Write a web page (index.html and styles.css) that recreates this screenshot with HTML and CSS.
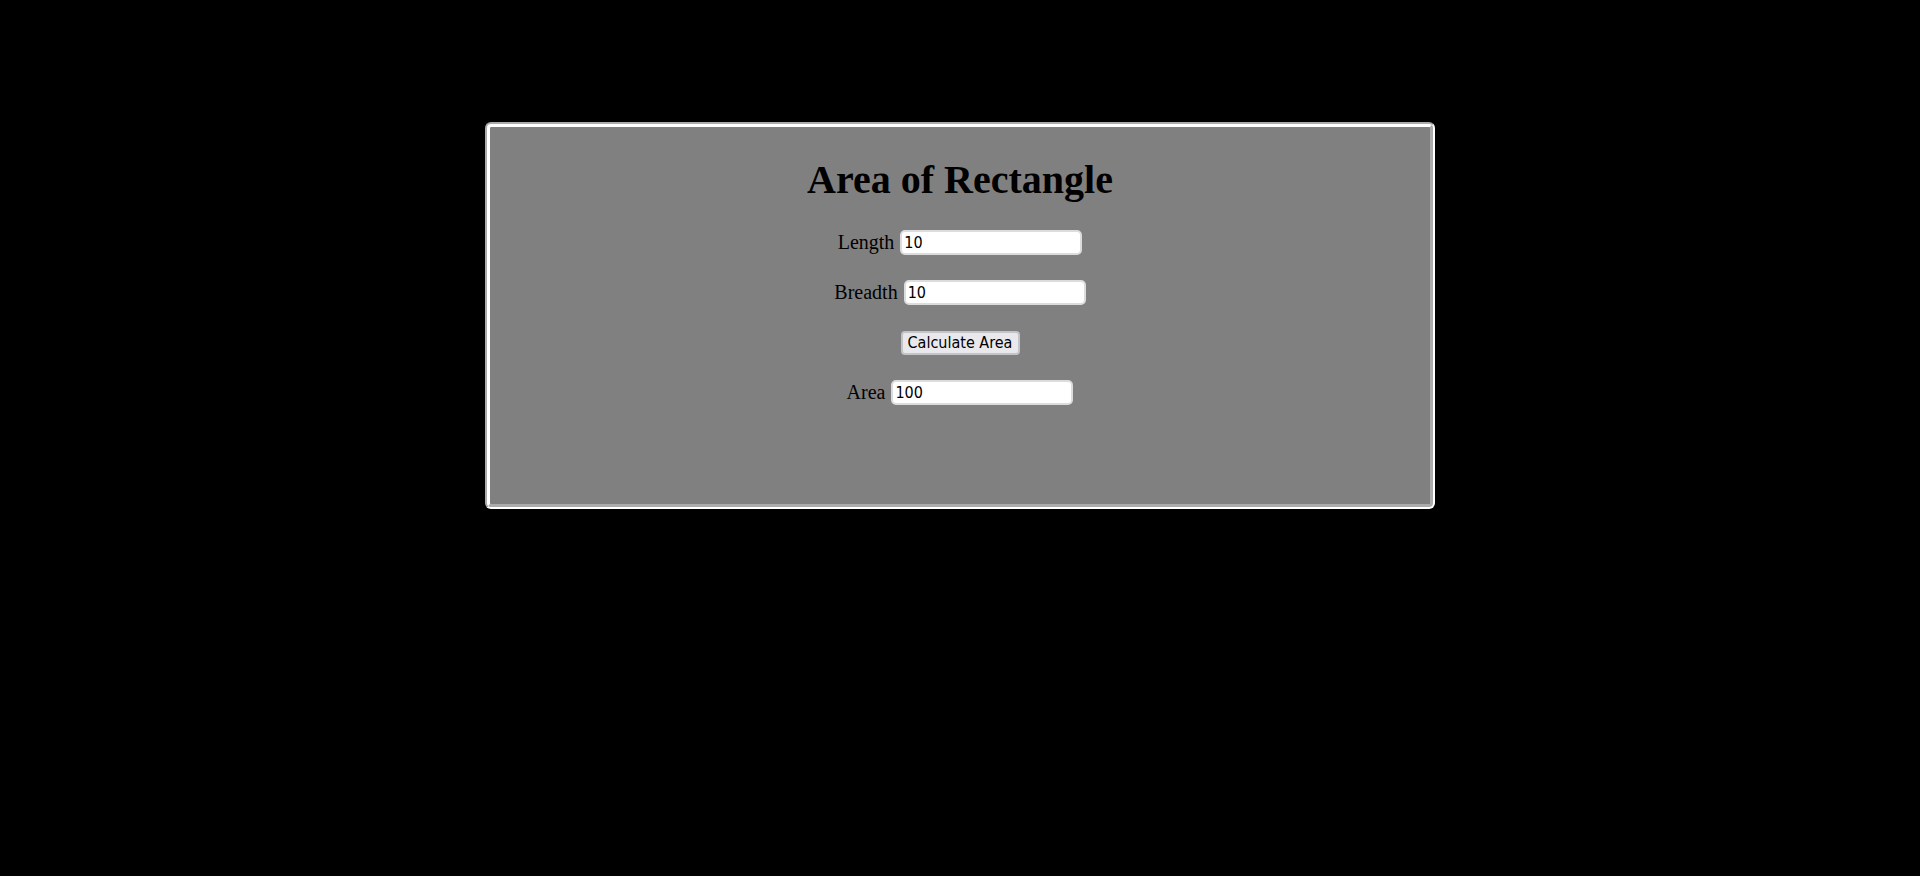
FILE: index.html
```html
<!DOCTYPE html>
<html>
<head>
<meta charset="utf-8">
<title>Area of Rectangle</title>
<link rel="stylesheet" href="styles.css">
</head>
<body>
<div class="panel">
  <h1 class="title">Area of Rectangle</h1>
  <div class="form">
    <div class="row"><label class="lbl">Length</label><input class="field" type="text" value="10"></div>
    <div class="row"><label class="lbl">Breadth</label><input class="field" type="text" value="10"></div>
    <div class="row"><button class="btn" type="button">Calculate Area</button></div>
    <div class="row"><label class="lbl">Area</label><input class="field" type="text" value="100"></div>
  </div>
</div>
</body>
</html>
```
FILE: styles.css
```css
html, body {
  margin: 0;
  padding: 0;
  background: #000;
}
body {
  padding-top: 122px;
  font-family: "Liberation Serif", "Times New Roman", serif;
  font-size: 20px;
  color: #000;
}
.panel {
  width: 940px;
  margin: 0 auto;
  background: #808080;
  border: 5px groove #fff;
  border-radius: 6px;
  padding: 0 0 99px;
}
.title {
  margin: 30px 0 27px;
  font-size: 40px;
  font-weight: bold;
  text-align: center;
  line-height: 46px;
}
.form {
  display: flex;
  flex-direction: column;
  align-items: center;
  gap: 25px;
}
.row {
  height: 25px;
  display: flex;
  align-items: center;
  justify-content: center;
  gap: 6px;
}
.lbl {
  line-height: 23px;
}
.field {
  box-sizing: border-box;
  width: 182px;
  height: 25px;
  margin: 0;
  padding: 1px 2px;
  border: 2px solid #dcdcdc;
  border-radius: 5px;
  background: #fff;
  font-family: "DejaVu Sans Condensed", "DejaVu Sans", sans-serif;
  font-size: 16px;
  color: #000;
  outline: none;
}
.btn {
  box-sizing: border-box;
  width: 119px;
  height: 24px;
  margin: 0;
  padding: 0 4px;
  border: 2px solid #c4c4c8;
  border-radius: 4px;
  background: #e9e9ed;
  font-family: "DejaVu Sans Condensed", "DejaVu Sans", sans-serif;
  font-size: 16px;
  color: #000;
}
```
